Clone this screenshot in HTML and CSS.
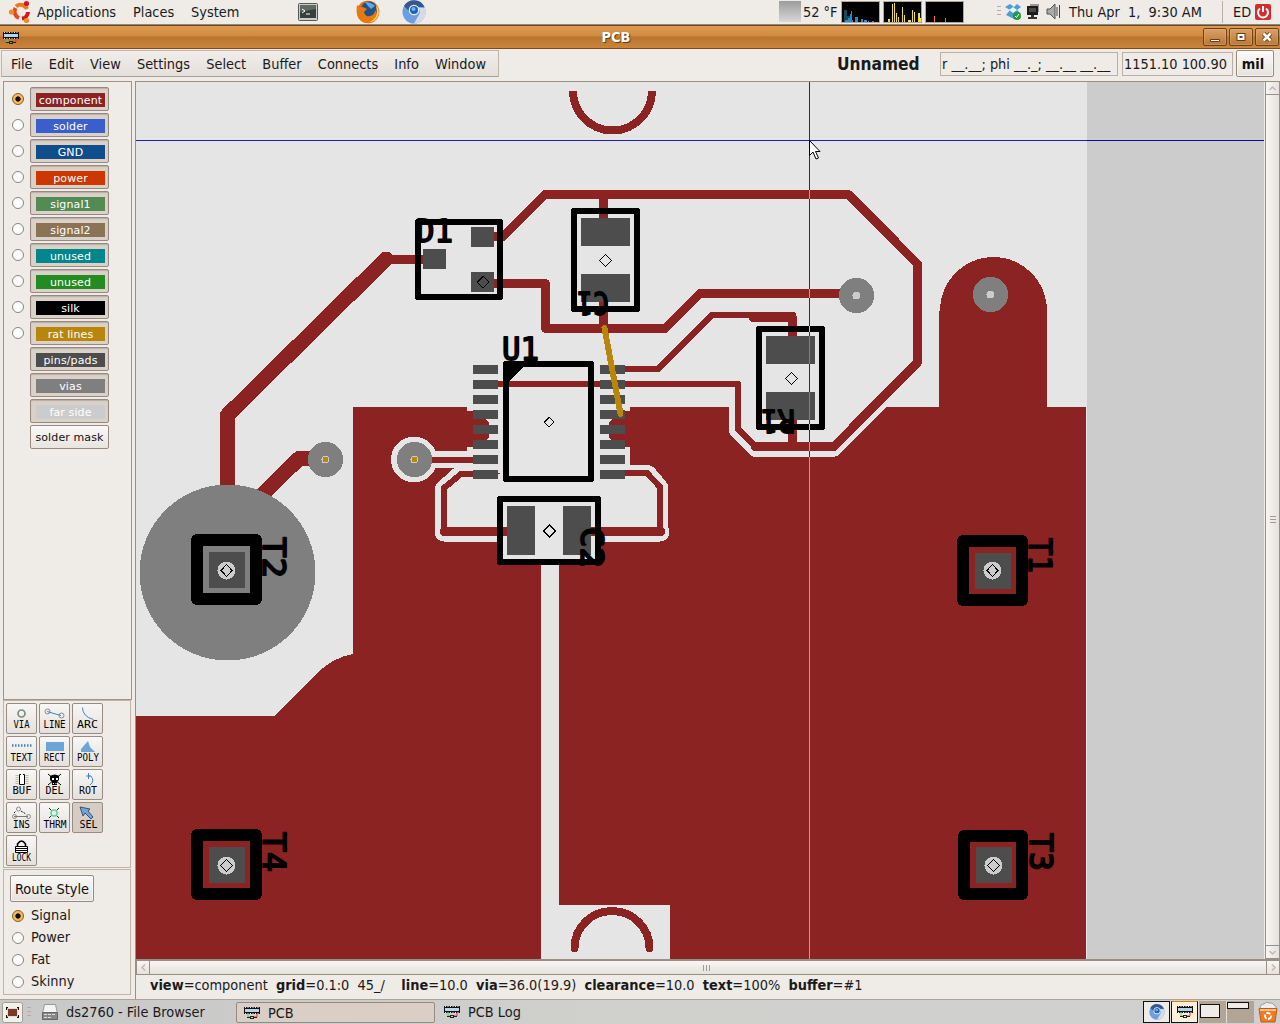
FILE: index.html
```html
<!DOCTYPE html>
<html lang="en">
<head>
<meta charset="utf-8">
<title>PCB</title>
<link rel="stylesheet" href="styles.css">
</head>
<body>
<svg class="defs" width="0" height="0">
  <symbol id="chip" viewBox="0 0 16 14">
    <path d="M0 1h16v7H0z" fill="#111"/><path d="M1 3h14v3H1z" fill="#b9d3ea"/>
    <path d="M1 1.500h15M1 7.500h15" stroke="#e8e8e8" stroke-width="1" stroke-dasharray="1 1.500"/>
    <path d="M4 8v3h2" stroke="#4d4" fill="none"/><path d="M13 8v3h-3" stroke="#e33" fill="none"/>
    <path d="M3 11.500h3M10 11.500h3M6.500 10v3M9.500 10v3M7 10.500h2M7 12.500h2" stroke="#222" fill="none"/>
  </symbol>
  <symbol id="chromium" viewBox="0 0 24 24">
    <circle cx="12" cy="12" r="11.500" fill="#6c9fdf"/><path d="M2 6A11.500 11.500 0 0 1 22.500 7H12a5 5 0 0 0-5 4z" fill="#35598f"/>
    <path d="M23 8a11.500 11.500 0 0 1-11 15.500l5-9q2-4-1-7z" fill="#d5dbe6"/>
    <circle cx="12" cy="10" r="5.300" fill="#e6edf7"/><circle cx="12" cy="10" r="4" fill="#1c62b4"/><circle cx="11.500" cy="9" r="2" fill="#6ab8f2"/>
  </symbol>
</svg>

<header class="panel">
  <svg class="ubuntu" width="24" height="24" viewBox="0 0 24 24">
    <g fill="none" stroke-width="4"><path d="M8 6.500A7 7 0 0 1 19 9" stroke="#ee7a1c"/><path d="M20 12A7 7 0 0 1 14 18.500" stroke="#d4181c"/><path d="M11 18A7 7 0 0 1 7.500 8" stroke="#e44820"/></g>
    <circle cx="3.500" cy="12" r="2.600" fill="#f08a24"/><circle cx="18.500" cy="3.500" r="2.600" fill="#d4181c"/><circle cx="18.500" cy="20.500" r="2.600" fill="#f08a24"/>
  </svg>
  <span class="p1">Applications</span><span class="p2">Places</span><span class="p3">System</span>
  <svg class="term" width="20" height="18" viewBox="0 0 20 18"><rect x=".5" y=".5" width="19" height="17" rx="1" fill="#c9cdca" stroke="#55585a"/><rect x="2" y="2" width="16" height="13" fill="#3a3f3c"/><path d="M2 9V2h16v4z" fill="#626864"/><path d="M4 6l3 2-3 2M8 11h4" stroke="#fff" fill="none"/></svg>
  <svg class="fox" width="24" height="24" viewBox="0 0 24 24"><circle cx="12" cy="12" r="11.300" fill="#e26c12"/><circle cx="13" cy="9.500" r="8" fill="#22508c"/><path d="M9 2q6 0 10 4l-4 3-3-3z" fill="#69a9d8"/><path d="M1 5q3 3 6 2l4 2-3 3q1 5 6 4 5-1 5-6 3 4 0 8-4 6-11 4Q-1 18 1 5z" fill="#e87812"/><path d="M20 5q5 7 1 13-3 4-8 4 8-3 8-10z" fill="#ffd54a"/></svg>
  <svg class="chr" width="24" height="24"><use href="#chromium"/></svg>
  <div class="haze"></div>
  <span class="temp">52 °F</span>
  <svg class="graph" width="39" height="22"><path fill="#000" d="M0 0h39v22H0z"/><path fill="#174a5c" d="M2 8h3v12H2zM5 14h3v6H5z"/><path fill="#2a8bc6" d="M8 12h1v8H8zM9 9h1v11H9zM6 16h2v4H6zM13 15h3v5h-3zM3 18h8v2H3zM19 17h2v3h-2zM22 18h3v2h-3zM26 19h1v1h-1zM30 19h2v1h-2z"/></svg>
  <svg class="graph" width="39" height="22"><path fill="#000" d="M0 0h39v22H0z"/><path fill="#f5df3f" d="M4 17h2v3H4zM8 2h1v18H8zM10 1h1v19h-1zM12 11h1v9h-1zM14 15h1v5h-1zM18 5h1v15h-1zM20 13h1v7h-1zM24 18h3v2h-3zM28 8h1v12h-1zM30 10h1v10h-1zM34 11h2v9h-2zM36 16h2v4h-2z"/></svg>
  <svg class="graph" width="39" height="22"><path fill="#000" d="M0 0h39v22H0z"/><path fill="#ff6a10" d="M8 14h1v6H8zM19 16h1v4h-1z"/></svg>
  <svg class="tray" width="64" height="22" viewBox="0 0 64 22">
    <path d="M0 5.500h4M0 9.500h4M0 13.500h4" stroke="#b5aea6"/>
    <path d="M8 6l5-3 4 3 3-3 4 3-4 3 4 4-7 5-8-4 4-5z" fill="#4c9ed4"/><path d="M12 9l4-3 4 3-4 3z" fill="#e8f4fc"/><circle cx="20" cy="15" r="4" fill="#27963c"/><path d="M18 15l1.500 1.500L22 13" stroke="#fff" fill="none"/>
    <path d="M33 3h9v8h-9z" fill="#999"/><path d="M30 5h11v9H30z" fill="#1c1c1c"/><path d="M32 7h7v4h-7z" fill="#4a4a4a"/><path d="M34 14h3v2h3v2h-9v-2h3z" fill="#333"/>
    <path d="M50 8h3l5-5v15l-5-5h-3z" fill="#aaa" stroke="#555"/><path d="M60 6v9M62.500 4v13" stroke="#444" fill="none"/>
  </svg>
  <span class="clock">Thu Apr&nbsp; 1,&nbsp; 9:30 AM</span>
  <span class="user">ED</span>
  <svg class="power" width="16" height="16" viewBox="0 0 16 16"><rect width="16" height="16" rx="2" fill="#d52a2e"/><path d="M5 4.500a5 5 0 1 0 6 0M8 2v6" stroke="#fff" stroke-width="2" fill="none"/></svg>
</header>

<div class="titlebar">
  <svg class="title-icon" width="16" height="14"><use href="#chip"/></svg>
  <span class="title">PCB</span>
  <div class="wbtns">
    <svg class="wbtn" width="24" height="18"><path d="M6.500 10.500h9v2h-9z" fill="#fff" stroke="#6b3c12"/></svg>
    <svg class="wbtn" width="24" height="18"><path d="M8.500 6h5v4h-5z" fill="none" stroke="#6b3c12" stroke-width="4"/><path d="M8.500 6h5v4h-5z" fill="none" stroke="#fff" stroke-width="2"/></svg>
    <svg class="wbtn" width="24" height="18"><path d="M7.500 4.500l7 7M14.500 4.500l-7 7" stroke="#6b3c12" stroke-width="4.500"/><path d="M7.500 4.500l7 7M14.500 4.500l-7 7" stroke="#fff" stroke-width="2.500"/></svg>
  </div>
</div>

<div class="menurow">
  <nav class="menubar"><span>File</span><span>Edit</span><span>View</span><span>Settings</span><span>Select</span><span>Buffer</span><span>Connects</span><span>Info</span><span>Window</span></nav>
  <b class="docname">Unnamed</b>
  <div class="field f1">r __.__; phi __._; __.__ __.__</div>
  <div class="field f2">1151.10 100.90</div>
  <button class="mil">mil</button>
</div>

<main class="main">
  <aside class="side">
    <section class="layers">
      <div class="layer"><i class="radio on"></i><div class="lbtn"><span class="c-component">component</span></div></div>
      <div class="layer"><i class="radio"></i><div class="lbtn"><span class="c-solder">solder</span></div></div>
      <div class="layer"><i class="radio"></i><div class="lbtn"><span class="c-gnd">GND</span></div></div>
      <div class="layer"><i class="radio"></i><div class="lbtn"><span class="c-power">power</span></div></div>
      <div class="layer"><i class="radio"></i><div class="lbtn"><span class="c-signal1">signal1</span></div></div>
      <div class="layer"><i class="radio"></i><div class="lbtn"><span class="c-signal2">signal2</span></div></div>
      <div class="layer"><i class="radio"></i><div class="lbtn"><span class="c-teal">unused</span></div></div>
      <div class="layer"><i class="radio"></i><div class="lbtn"><span class="c-green">unused</span></div></div>
      <div class="layer"><i class="radio"></i><div class="lbtn"><span class="c-silk">silk</span></div></div>
      <div class="layer"><i class="radio"></i><div class="lbtn"><span class="c-rat">rat lines</span></div></div>
      <div class="layer"><i class="radio none"></i><div class="lbtn"><span class="c-pins">pins/pads</span></div></div>
      <div class="layer"><i class="radio none"></i><div class="lbtn"><span class="c-vias">vias</span></div></div>
      <div class="layer"><i class="radio none"></i><div class="lbtn"><span class="c-far">far side</span></div></div>
      <div class="layer"><i class="radio none"></i><div class="lbtn flat"><span>solder mask</span></div></div>
    </section>
    <section class="tools">
      <svg class="tool" viewBox="0 0 29 29"><circle cx="14.500" cy="9.500" r="3.500" fill="none" stroke="#7d8a86" stroke-width="1.700"/><text x="6.500" y="24" textLength="16" lengthAdjust="spacingAndGlyphs">VIA</text></svg>
      <svg class="tool" viewBox="0 0 29 29"><g fill="none" stroke="#888"><circle cx="7.500" cy="7.500" r="2.500"/><circle cx="21.500" cy="11.500" r="2.500"/></g><path d="M7 7.500l14 4" stroke="#4682c4"/><text x="3.500" y="24" textLength="22" lengthAdjust="spacingAndGlyphs">LINE</text></svg>
      <svg class="tool" viewBox="0 0 29 29"><path d="M9.500 3.500q0 9 11 12" fill="none" stroke="#4682c4"/><text x="4" y="24" textLength="21" lengthAdjust="spacingAndGlyphs">ARC</text></svg>
      <svg class="tool" viewBox="0 0 29 29"><path d="M5 8.500h20" stroke="#4682c4" stroke-width="2.400" stroke-dasharray="1.500 1.500"/><text x="3.500" y="24" textLength="22" lengthAdjust="spacingAndGlyphs">TEXT</text></svg>
      <svg class="tool" viewBox="0 0 29 29"><path d="M6 5h18v9H6z" fill="#6ea5d8"/><text x="4" y="24" textLength="21" lengthAdjust="spacingAndGlyphs">RECT</text></svg>
      <svg class="tool" viewBox="0 0 29 29"><path d="M8 15v-3l7-8 2 6 5 5z" fill="#6ea5d8"/><text x="4" y="24" textLength="22" lengthAdjust="spacingAndGlyphs">POLY</text></svg>
      <svg class="tool" viewBox="0 0 29 29"><path d="M10 5v9M20 5v9" stroke="#c5b99b" stroke-width="3" stroke-dasharray="1 1"/><path d="M12.500 4.500h5v10h-5z" fill="#fff" stroke="#000"/><path d="M14 4.500h2" stroke="#fff"/><text x="5.500" y="24" textLength="19" lengthAdjust="spacingAndGlyphs">BUF</text></svg>
      <svg class="tool" viewBox="0 0 29 29"><path d="M8 4l13 11M21 4L8 15" stroke="#000"/><path d="M10 6q5-3 9 0v4l-2 2v3h-5v-3l-2-2z"/><path d="M12 8h2v2h-2zM16 8h2v2h-2zM13 13h1v1h-1zM15.500 13h1v1h-1z" fill="#fff"/><text x="5.500" y="24" textLength="18" lengthAdjust="spacingAndGlyphs">DEL</text></svg>
      <svg class="tool" viewBox="0 0 29 29"><path d="M17 15q5-4 1-9h-3M15.500 3v6M13 6h4" fill="none" stroke="#4682c4"/><text x="6" y="24" textLength="18" lengthAdjust="spacingAndGlyphs">ROT</text></svg>
      <svg class="tool" viewBox="0 0 29 29"><g fill="none" stroke="#888"><circle cx="7.500" cy="13.500" r="2"/><circle cx="21.500" cy="13.500" r="2"/><circle cx="11.500" cy="6" r="2"/></g><path d="M7 13.500h14" stroke="#777"/><path d="M7 10l2-2M14 8l5 3" stroke="#222" stroke-dasharray="2 1"/><text x="6" y="24.500" textLength="17" lengthAdjust="spacingAndGlyphs">INS</text></svg>
      <svg class="tool" viewBox="0 0 29 29"><path d="M9 5l3 3M19 5l-3 3M9 15l3-3M19 15l-3-3" stroke="#222"/><circle cx="14" cy="10" r="3" fill="none" stroke="#58d4a0" stroke-width="1.500"/><text x="3.500" y="24.500" textLength="23" lengthAdjust="spacingAndGlyphs">THRM</text></svg>
      <svg class="tool pressed" viewBox="0 0 29 29"><path d="M7 4l10 2-2 2 5 6-2 2-6-6-2 3z" fill="#6ea5d8" stroke="#223c55" stroke-width=".8"/><text x="6.500" y="25" textLength="18" lengthAdjust="spacingAndGlyphs">SEL</text></svg>
      <svg class="tool" viewBox="0 0 29 29"><path d="M10.500 10V8q4-6 8 0v2" fill="none" stroke="#000" stroke-width="1.500"/><path d="M8.500 10.500h12v6h-12z" fill="#fff" stroke="#000"/><path d="M9 12.500h11M9 14.500h11" stroke="#000"/><text x="5" y="25" textLength="19" lengthAdjust="spacingAndGlyphs">LOCK</text></svg>
    </section>
    <section class="route">
      <button class="rbtn">Route Style</button>
      <div class="ropt"><i class="radio on"></i>Signal</div>
      <div class="ropt"><i class="radio"></i>Power</div>
      <div class="ropt"><i class="radio"></i>Fat</div>
      <div class="ropt"><i class="radio"></i>Skinny</div>
    </section>
  </aside>

  <div class="work">
    <div class="canvasrow">
      <svg class="board" width="1128" height="877" viewBox="136 82 1128 877" shape-rendering="crispEdges">
        <path class="off" d="M136 82h1128v877H136z"/><path class="bg" d="M136 82h951v877H136z"/>
        <!-- copper pour -->
        <path class="cu" d="M353 407H1086V959H136V716H275L317 673Q334 657 353 654z"/>
        <path class="cu" d="M939 407V311H940A53.500 54 0 0 1 1047 311V407z"/>
        <!-- clearances -->
        <path class="bg" d="M541 560h18v345h111v54H541zM467 407h163v66H467zM729 407v25l3 5 18 18 4 2h80l5-2 47-48zM500 465h98v97h-98z"/>
        <path class="bg" d="M473 474H461L444 487V531H660V487L647 473z"/>
        <g class="gap"><path d="M414 459.500H473" stroke-width="17"/><path d="M475 474H461L444 489V531" stroke-width="18"/><path d="M444 532H500" stroke-width="19"/><path d="M625 473H648L660 487V531" stroke-width="16"/><path d="M600 532H660" stroke-width="19"/></g>
        <circle class="bg" cx="414" cy="459.500" r="23"/>
        <path class="cu" d="M466 411h7v8h13l3 4v14l-3 4h-13v6h-7zM631 411h-6v8h-13l-3 4v14l3 4h13v6h6z"/>
        <!-- tracks -->
        <g class="track w9">
          <path d="M386 259.500H430M490 236.500H503L545 194.500H848.500L917.500 264V362.500L834 446.500H755"/>
          <path d="M490 283.500H545.500V328.500H665L700 293.500H856M603.500 194V225M603.500 295V328M753 317.500H792.500V345M792.500 415V446"/>
          <path d="M444 531.500H515M585 531.500H661"/>
        </g>
        <g class="track w6"><path d="M414 460H480M480 474H461L444 488V531M620 473H647L660 487V531M620 369H658L712 315H793M490 384H738V429L755 446"/></g>
        <g class="track w15"><path d="M227.500 500V415L386 259M250 507L299 458.500H325"/></g>
        <g class="arc"><path d="M573 95V91A39.500 39.500 0 0 0 652 91V94"/><path d="M574.500 948A37.500 37 0 0 1 649.500 948"/></g>
        <!-- vias -->
        <g class="via"><circle cx="227.500" cy="572.500" r="88"/><circle cx="325.500" cy="459.500" r="17.700"/><circle cx="414.500" cy="459.500" r="17.700"/><circle cx="856.500" cy="295.500" r="17.700"/><circle cx="990.500" cy="294.500" r="17.700"/></g>
        <g class="hole"><circle cx="325.500" cy="459.500" r="4"/><circle cx="414.500" cy="459.500" r="4"/><circle cx="856.500" cy="295.500" r="4"/><circle cx="990.500" cy="294.500" r="4"/></g>
        <path class="ratfill" d="M323 457h5v5h-5zM412 457h5v5h-5z"/>
        <!-- pads -->
        <path class="pad" d="M471 227h23v20h-23zM423 249h23v20h-23zM471 272h23v20h-23zM581 218h49v28h-49zM581 274h49v28h-49zM766 336h49v28h-49zM766 392h49v28h-49zM507 506h28v49h-28zM563 506h28v49h-28z"/>
        <path class="pad" d="M473 365h25v9h-25zM473 380h25v9h-25zM473 395h25v9h-25zM473 410h25v9h-25zM473 425h25v9h-25zM473 440h25v9h-25zM473 455h25v9h-25zM473 470h25v9h-25zM600 365h25v9h-25zM600 380h25v9h-25zM600 395h25v9h-25zM600 410h25v9h-25zM600 425h25v9h-25zM600 440h25v9h-25zM600 455h25v9h-25zM600 470h25v9h-25z"/>
        <path class="pad" d="M209 552h36v36h-36zM975 553h36v36h-36zM209 847h36v36h-36zM976 847h36v36h-36z"/>
        <g class="hole"><circle cx="226.500" cy="570.500" r="9"/><circle cx="992.500" cy="570.500" r="9"/><circle cx="226.500" cy="865.500" r="9"/><circle cx="993.500" cy="865.500" r="9"/></g>
        <!-- silk outlines -->
        <g class="silk"><path d="M418 222h82v75h-82zM574 211h63v98h-63zM759 329h63v98h-63zM506 364h85v115h-85zM500 499h98v63h-98z"/></g>
        <path d="M506 364h20l-18 18h-2z"/>
        <g class="silk fat"><path d="M197 540h59v59h-59zM963 541h59v59h-59zM197 835h59v59h-59zM964 836h58v58h-58z"/></g>
        <g class="names" shape-rendering="auto">
          <text x="416" y="242" textLength="37" lengthAdjust="spacingAndGlyphs">D1</text>
          <text x="502" y="360" textLength="37" lengthAdjust="spacingAndGlyphs">U1</text>
          <text transform="translate(609 292) rotate(180)" textLength="32" lengthAdjust="spacingAndGlyphs">C1</text>
          <text transform="translate(795 410) rotate(180)" textLength="34" lengthAdjust="spacingAndGlyphs">R1</text>
          <text transform="translate(581 527) rotate(90)" textLength="41" lengthAdjust="spacingAndGlyphs">C2</text>
          <text transform="translate(263 537) rotate(90)" textLength="41" lengthAdjust="spacingAndGlyphs">T2</text>
          <text transform="translate(1029 538) rotate(90)" textLength="35" lengthAdjust="spacingAndGlyphs">T1</text>
          <text transform="translate(263 832) rotate(90)" textLength="40" lengthAdjust="spacingAndGlyphs">T4</text>
          <text transform="translate(1030 833) rotate(90)" textLength="38" lengthAdjust="spacingAndGlyphs">T3</text>
        </g>
        <path class="mark" transform="translate(-.4 -.3)" d="M483.500 276.500l6 6-6 6-6-6zM605.900 254.800l6 6-6 6-6-6zM791.900 372.800l6 6-6 6-6-6zM549.900 525.500l6 6-6 6-6-6zM549.500 417.500l5 5-5 5-5-5zM227 564.800l5.500 6-5.500 6-5.500-6zM992.900 564.800l5.500 6-5.500 6-5.500-6zM226.900 859.800l6 6-6 6-6-6zM993.900 859.800l6 6-6 6-6-6z"/>
        <path class="rat" d="M604.500 328L620.500 414"/>
        <!-- crosshair, inverted against what it crosses -->
        <path class="xh" d="M136 140h951v1H136zM809 82h1v877h-1z"/><path fill="#0d0d9c" d="M1087 140h177v1h-177z"/>
        <path fill="#64dc32" d="M809 190h1v9h-1zM809 289h1v9h-1zM809 442h1v9h-1zM809 457h1v502h-1z"/>
        <path fill="#8c8c32" d="M809 336h1v28h-1zM809 392h1v28h-1z"/><path fill="#dcdc1e" d="M809 326h1v6h-1zM809 424h1v6h-1z"/>
        <path shape-rendering="auto" d="M809.500 140.500v15l3.500-3.500 3 7 2.500-1-3-6.500h4.500z" fill="#fff" stroke="#000"/>
      </svg>
      <div class="vscroll"><span><svg width="7" height="5"><path d="M.5 4l3-3 3 3" fill="none" stroke="#c4b9ad" stroke-width="1.500"/></svg></span><em><i></i><i></i><i></i></em><span><svg width="7" height="5"><path d="M.5 1l3 3 3-3" fill="none" stroke="#c4b9ad" stroke-width="1.500"/></svg></span></div>
    </div>
    <div class="hscroll"><span><svg width="5" height="7"><path d="M4 .5l-3 3 3 3" fill="none" stroke="#c4b9ad" stroke-width="1.500"/></svg></span><em><i></i><i></i><i></i></em><span><svg width="5" height="7"><path d="M1 .5l3 3-3 3" fill="none" stroke="#c4b9ad" stroke-width="1.500"/></svg></span></div>
    <div class="status"><b>view</b>=component&nbsp; <b>grid</b>=0.1:0&nbsp; 45_/&nbsp; &nbsp; <b>line</b>=10.0&nbsp; <b>via</b>=36.0(19.9)&nbsp; <b>clearance</b>=10.0&nbsp; <b>text</b>=100%&nbsp; <b>buffer</b>=#1</div>
  </div>
</main>

<footer class="taskbar">
  <svg class="show" width="21" height="21" viewBox="0 0 21 21"><rect x=".5" y=".5" width="20" height="20" rx="2" fill="#f3f0ec" stroke="#a79b90"/><path d="M4 5h13v11H4z" fill="#111"/><path d="M6 5h9M6 16h9M4 8v5M17 8v5" stroke="#f3f0ec" stroke-width="2"/><path d="M5.500 6.500h10v8h-10z" fill="#7a3b1e" stroke="#ddd"/></svg>
  <svg class="grip" width="4" height="10"><path d="M0 .5h4M0 4.500h4M0 8.500h4" stroke="#b3aca5"/></svg>
  <svg class="drive" width="16" height="16" viewBox="0 0 16 16"><path d="M2.500.5h11l2 9H.5z" fill="#f4f4f4" stroke="#999"/><path d="M.5 8.500h15v7H.5z" fill="#888" stroke="#666"/><path d="M2 10.500h12M2 13.500h8" stroke="#ddd" stroke-dasharray="3 1"/></svg>
  <span class="t1">ds2760 - File Browser</span>
  <div class="active"><svg width="16" height="14"><use href="#chip"/></svg><span>PCB</span></div>
  <svg class="logi" width="16" height="14"><use href="#chip"/></svg>
  <span class="t3">PCB Log</span>
  <div class="pager">
    <div class="ws light"><svg width="16" height="16"><use href="#chromium"/></svg></div>
    <div class="ws cur"><svg width="16" height="14"><use href="#chip"/></svg></div>
    <div class="ws w3"><i></i></div><div class="ws w4"><i></i></div>
  </div>
  <svg class="trash" width="20" height="22" viewBox="0 0 20 22"><path d="M2 8q0-5 4-5 2-3 5-1 4-1 5 2 3 1 2 4z" fill="#eee" stroke="#999"/><path d="M1 7.500h18l-2 13.500H3z" fill="#f07a22" stroke="#c35b10"/><path d="M2 9h16" stroke="#ffc08a" stroke-width="2"/><circle cx="10" cy="15" r="3" fill="none" stroke="#fff" stroke-width="1.800" stroke-dasharray="4.500 1.500"/></svg>
</footer>
</body>
</html>
```

FILE: styles.css
```css
* { box-sizing: border-box; }
body { margin: 0; width: 1280px; height: 1024px; overflow: hidden; display: flex; flex-direction: column; background: #efebe7; color: #1a1a1a; font: 14.4px/16px "DejaVu Sans Condensed", "DejaVu Sans", sans-serif; font-stretch: condensed; }
svg { display: block; flex: none; }
.defs { height: 0; width: 0; }
span, b { white-space: pre; }
button { font: inherit; color: #111; padding: 0; border: 1px solid #978b80; border-radius: 2px; background: linear-gradient(#fbfaf9, #e6e1dc); box-shadow: inset 0 0 0 1px #fff8; }

/* desktop panel */
.panel { height: 25px; flex: none; display: flex; align-items: center; padding: 0 9px 1px 8px; border-bottom: 1px solid #8e867c; background: #efebe6; }
.p1 { margin-left: 5px; width: 96px; }
.p2 { width: 58px; }
.p3 { width: 107px; }
.fox { margin-left: 38px; }
.chr { margin-left: 22px; }
.haze { width: 22px; height: 21px; margin-left: 353px; background: linear-gradient(#9c9c9c, #d8d8d8); }
.temp { width: 35px; margin: 0 0 0 2px; }
.graph { margin-left: 3px; border: 1px solid #b0a69c; }
.tray { margin-left: 33px; }
.clock { margin-left: 8px; width: 153px; }
.user { border-left: 1px solid #b9b0a6; padding: 3px 0 3px 10px; width: 32px; }
.power { margin-left: 1px; }

/* window frame */
.titlebar { height: 24px; flex: none; display: grid; grid-template-columns: 1fr auto 1fr; align-items: center; padding: 0 1px 0 3px; border-top: 1px solid #6b4a28; border-bottom: 1px solid #7a4d20; background: linear-gradient(#dd9a50, #d18b40 45%, #b87531 50%, #cc8437); }
.title { color: #fff; font-weight: bold; text-shadow: 1px 1px #6b3c12; margin: 0 25px 0 -25px; }
.title-icon { margin-top: 1px; }
.wbtns { display: flex; gap: 2px; justify-content: flex-end; }
.wbtn { border: 1px solid #6d421a; border-radius: 2px; background: linear-gradient(#dba065, #b87838); box-shadow: inset 0 0 0 1px #e9b98155; }
.menurow { height: 32px; flex: none; display: flex; align-items: center; padding-bottom: 3px; }
.menubar { width: 498px; height: 27px; margin-left: 1px; display: flex; align-items: center; gap: 16.200px; padding-left: 9px; border: 1px solid #c1b3a7; border-bottom-color: #aa9f95; background: linear-gradient(#f0edea, #e6e0db); }
.docname { margin-left: 338px; width: 103px; font-size: 17.2px; }
.field { height: 24px; border: 1px solid #bcaea2; padding: 3px 1px; white-space: nowrap; overflow: hidden; }
.f1 { width: 178px; }
.f2 { width: 111px; margin-left: 4px; }
.mil { width: 38px; height: 27px; margin-left: 3px; padding-right: 4px; font-weight: bold; }

/* left column */
.main { height: 918px; flex: none; display: flex; }
.side { width: 135px; flex: none; display: flex; flex-direction: column; padding-left: 3px; }
.layers { height: 619px; width: 129px; border: 1px solid #9e948a; padding: 5px 0 0 8px; font-family: "DejaVu Sans", sans-serif; font-stretch: normal; }
.layer { display: flex; height: 26px; gap: 6px; }
.radio { width: 12px; height: 12px; flex: none; border: 1px solid #8d8379; border-radius: 50%; background: #fff; margin-top: 6px; }
.radio.on { background: radial-gradient(circle, #111 0 2.300px, #f7b860 3px); border-color: #8a5a20; }
.radio.none { visibility: hidden; }
.lbtn { width: 79px; height: 24px; padding: 5px 3px 4px 5px; border: 1px solid #968a80; border-radius: 2px; background: #dad1c8; box-shadow: inset 0 1px 1px #b9aea4; }
.lbtn span { display: block; height: 14px; line-height: 16px; text-align: center; color: #fff; font-size: 11px; letter-spacing: .12px; }
.lbtn.flat { background: linear-gradient(#faf9f8, #e8e4df); box-shadow: none; padding: 4px 1px; }
.lbtn.flat span { color: #111; }
.c-component { background: #8b2323; } .c-solder { background: #3a5fcd; } .c-gnd { background: #104e8b; } .c-power { background: #cd3700; }
.c-signal1 { background: #548b54; } .c-signal2 { background: #8b7355; } .c-teal { background: #00868b; } .c-green { background: #228b22; }
.c-silk { background: #000; } .c-rat { background: #b8860b; } .c-pins { background: #4d4d4d; } .c-vias { background: #7f7f7f; } .c-far { background: #ccc; }
.tools { height: 168px; width: 128px; display: grid; grid-template-columns: repeat(3, 31px); grid-auto-rows: 31px; gap: 2px; padding: 2px; border: 1px solid #c1b3a7; }
.tool { width: 31px; height: 31px; border: 1px solid #968c82; border-radius: 2px; background: linear-gradient(#f8f7f5, #e5e0db); }
.tool.pressed { background: #d6ccc4; }
.tool text { font: 11px "DejaVu Sans Mono", monospace; fill: #000; }
.route { height: 126px; width: 128px; margin-top: 1px; padding: 5px 0 0 6px; border: 1px solid #c1b3a7; }
.rbtn { width: 84px; height: 27px; display: block; margin-bottom: 2px; }
.ropt { height: 22px; display: flex; gap: 7px; padding: 3px 0 0 2px; }
.ropt .radio { margin-top: 3px; }

/* drawing area */
.work { width: 1145px; border-left: 1px solid #9a8f85; }
.canvasrow { display: flex; height: 878px; border-top: 1px solid #9a8f85; }
.bg { fill: #e5e5e5; } .off { fill: #ccc; } .cu { fill: #8b2323; } .pad { fill: #4d4d4d; }
.gap { fill: none; stroke: #e5e5e5; stroke-linecap: round; stroke-linejoin: round; }
.track { fill: none; stroke: #8b2323; stroke-linecap: round; stroke-linejoin: round; }
.w6 { stroke-width: 6; } .w9 { stroke-width: 9; } .w15 { stroke-width: 15; }
.arc { fill: none; stroke: #8b2323; stroke-width: 8; stroke-linecap: round; }
.via { fill: #7f7f7f; } .hole { fill: #ccc; } .ratfill { fill: #b8860b; }
.silk { fill: none; stroke: #000; stroke-width: 6; stroke-linejoin: round; }
.silk.fat { stroke-width: 12; }
.names { font: 32.5px "DejaVu Sans Mono", monospace; font-stretch: normal; fill: #000; stroke: #000; stroke-width: 1.800; stroke-linejoin: round; }
.mark { fill: none; stroke: #000; }
.rat { stroke: #b8860b; stroke-width: 6; stroke-linecap: round; }
.xh { fill: #1e1ebe; }

.vscroll, .hscroll { display: flex; justify-content: space-between; }
.vscroll { flex-direction: column; width: 15px; margin-left: 1px; border: 1px solid #9a8f85; border-top: 0; background: linear-gradient(90deg, #f8f6f4, #e6e1dc); }
.hscroll { height: 16px; width: 1144px; border: 1px solid #9a8f85; border-top-width: 2px; background: linear-gradient(#f8f6f4, #e6e1dc); }
.vscroll span, .hscroll span { display: flex; align-items: center; justify-content: center; }
.vscroll span { height: 13px; border-bottom: 1px solid #9a8f85; }
.vscroll span:last-child { border-bottom: 0; border-top: 1px solid #9a8f85; }
.hscroll span { width: 13px; border-right: 1px solid #9a8f85; }
.hscroll span:last-child { border-right: 0; border-left: 1px solid #9a8f85; }
.vscroll em, .hscroll em { display: flex; gap: 2px; align-items: center; justify-content: center; flex: 1; }
.vscroll em { flex-direction: column; padding-bottom: 2px; }
.vscroll i { width: 6px; height: 1px; background: #a39a90; }
.hscroll i { width: 1px; height: 6px; background: #a39a90; }
.hscroll em { padding-right: 4px; }
.status { padding: 2px 0 0 14px; white-space: nowrap; }

/* window list */
.taskbar { height: 25px; flex: none; display: flex; align-items: center; border-top: 1px solid #b0a294; background: linear-gradient(90deg, #c8c8c8, #d0d0cd 50%, #cfcfcf); padding: 0 2px 0 2px; }
.grip { margin-left: 4px; }
.drive { margin-left: 11px; }
.t1 { margin-left: 8px; width: 170px; }
.active { width: 199px; height: 21px; display: flex; align-items: center; gap: 8px; padding: 1px 0 0 7px; border: 1px solid #968a80; border-radius: 2px; background: #d9cfc6; }
.logi { margin-left: 9px; }
.t3 { margin-left: 8px; }
.pager { display: flex; gap: 1px; height: 22px; background: #e8e0d8; margin-left: auto; }
.ws { width: 27px; height: 22px; display: flex; align-items: center; justify-content: center; background: #b2a595; }
.ws.light { background: #efebe6; border: 1px solid #111; }
.ws.cur { background: #fff0dc; border: 1px solid #111; border-top-color: #e07b10; }
.ws i { background: #efebe6; border: 1px solid #111; }
.w3 i { width: 20px; height: 14px; margin: -2px 5px 0 0; }
.w4 { align-items: flex-start; justify-content: flex-start; }
.w4 i { width: 22px; height: 7px; margin-top: 1px; }
.trash { margin-left: 4px; }
```
